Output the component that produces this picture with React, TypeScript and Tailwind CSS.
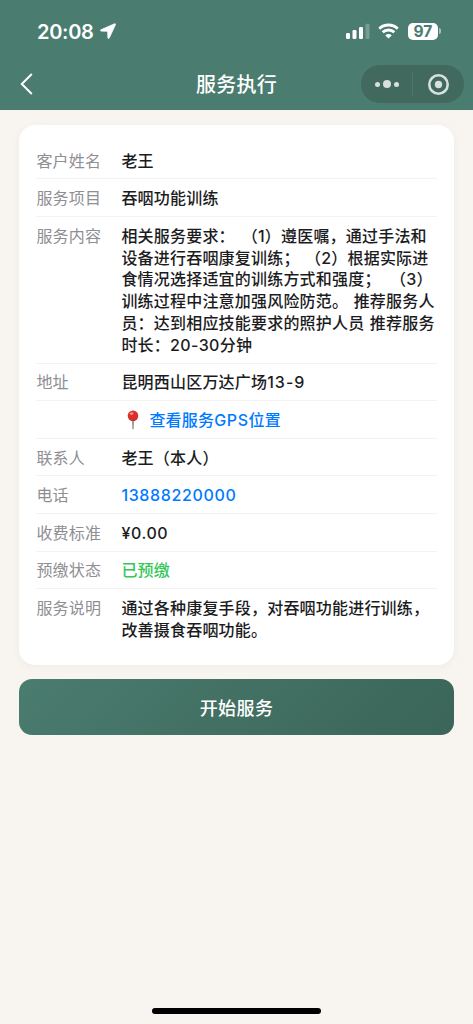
import type { ReactNode } from "react";

type Row = {
  label: string;
  lines: ReactNode[];
  tone?: string;
};

const rows: Row[] = [
  { label: "客户姓名", lines: ["老王"] },
  { label: "服务项目", lines: ["吞咽功能训练"] },
  {
    label: "服务内容",
    lines: [
      <span className="[word-spacing:2.5px]">相关服务要求： （1）遵医嘱，通过手法和</span>,
      <span className="[word-spacing:1px]">设备进行吞咽康复训练； （2）根据实际进</span>,
      <span className="[word-spacing:5px]">食情况选择适宜的训练方式和强度； （3）</span>,
      <span className="[word-spacing:1px]">训练过程中注意加强风险防范。 推荐服务人</span>,
      <span className="[word-spacing:1px]">员：达到相应技能要求的照护人员 推荐服务</span>,
      <>时长：<span className="tracking-[0.4px]">20-30</span>分钟</>,
    ],
  },
  { label: "地址", lines: [<>昆明西山区万达广场<span className="tracking-[1px]">13-9</span></>] },
  {
    label: "",
    tone: "text-[#007aff]",
    lines: [
      <span className="flex items-center">
        <PinIcon />
        查看服务<span className="tracking-[0.6px]">GPS</span>位置
      </span>,
    ],
  },
  { label: "联系人", lines: ["老王（本人）"] },
  { label: "电话", lines: ["13888220000"], tone: "text-[#007aff] tracking-[0.65px]" },
  { label: "收费标准", lines: ["¥0.00"], tone: "text-[#1c1c1e] tracking-[0.6px]" },
  { label: "预缴状态", lines: ["已预缴"], tone: "text-[#34c759]" },
  {
    label: "服务说明",
    lines: ["通过各种康复手段，对吞咽功能进行训练，", "改善摄食吞咽功能。"],
  },
];

function PinIcon() {
  return (
    <svg className="ml-[5px] mr-[9px] -mt-[2px] shrink-0" width="14" height="20" viewBox="0 0 14 20">
      <path d="M6.1 9h1.8l-.3 9.4-.6 1-.6-1z" fill="#85807e" />
      <circle cx="7" cy="5.7" r="5.3" fill="#d9302c" />
      <path d="M2.4 8.3a5.3 5.3 0 0 0 9.2 0 6 6 0 0 1-9.2 0z" fill="#a81f1e" />
      <ellipse cx="5.6" cy="3.6" rx="1.9" ry="1.4" fill="#f58a80" />
    </svg>
  );
}

function StatusBar() {
  return (
    <div className="h-[62px] pl-[37px] pr-[32px] flex items-center justify-between">
      <div className="flex items-center gap-[6px]">
        <span className="w-[57px] text-[20px] leading-none tracking-[-0.3px] font-semibold mt-px">20:08</span>
        <svg width="16" height="16" viewBox="0 0 16 16" fill="currentColor" stroke="currentColor" strokeWidth="0.8" strokeLinejoin="round">
          <path d="M14.8.7.9 6.8c-.7.3-.5 1.2.2 1.3l6.6.2.2 6.6c0 .8 1 .9 1.3.2L15.5 1.6c.2-.6-.2-1.1-.7-.9z" />
        </svg>
      </div>

      <div className="flex items-center">
        <svg width="24" height="16" viewBox="0 0 24 16" fill="currentColor">
          <rect x="0" y="10" width="4" height="6" rx="1.2" />
          <rect x="6.5" y="7" width="4" height="9" rx="1.2" />
          <rect x="13" y="4" width="4" height="12" rx="1.2" />
          <rect x="19.5" y="0.7" width="4" height="15.3" rx="1.2" opacity="0.25" />
        </svg>
        <svg className="ml-[8px]" width="21" height="16" viewBox="0 0 21 16" fill="none" stroke="currentColor" strokeWidth="2.9">
          <path d="M1.3 5.7a13.2 13.2 0 0 1 18.4 0" />
          <path d="M4.7 9.3a8.3 8.3 0 0 1 11.6 0" />
          <path d="M10.5 15.6 7.3 12.4a4.6 4.6 0 0 1 6.4 0z" fill="currentColor" stroke="none" />
        </svg>
        <span className="ml-[9px] w-[30px] h-[17px] pt-[1.5px] rounded-[5px] bg-white text-[#4a7c6f] text-[15.5px] leading-none font-bold flex items-center justify-center">
          97
        </span>
        <span className="ml-px w-[2px] h-[6px] rounded-r-full bg-white/50" />
      </div>
    </div>
  );
}

function NavBar() {
  return (
    <div className="h-[48px] pr-[9px] grid grid-cols-[112px_1fr_103px] items-start">
      <svg className="ml-[20px] mt-[11px]" width="14" height="22" viewBox="0 0 14 22" fill="none" stroke="currentColor" strokeWidth="2">
        <path d="M11.8 1 1.8 11l10 10" />
      </svg>
      <h1 className="mt-[9px] text-center text-[20px] leading-[28px] tracking-[0.2px] font-medium">
        服务执行
      </h1>
      <div className="mt-[3px] h-[38px] rounded-full bg-[#41695e] text-[#d7e0dd] flex items-center">
        <div className="flex-1 flex items-center justify-center gap-[3px]">
          <span className="w-[5px] h-[5px] rounded-full bg-current" />
          <span className="w-[8px] h-[8px] rounded-full bg-current" />
          <span className="w-[5px] h-[5px] rounded-full bg-current" />
        </div>
        <span className="w-px h-[24px] bg-[#4f766c]" />
        <div className="flex-1 flex items-center justify-center">
          <svg width="21" height="21" viewBox="0 0 21 21">
            <circle cx="10.5" cy="10.5" r="9.2" fill="none" stroke="currentColor" strokeWidth="2.6" />
            <circle cx="10.5" cy="10.5" r="3.7" fill="currentColor" />
          </svg>
        </div>
      </div>
    </div>
  );
}

export default function App() {
  return (
    <div className="min-h-screen bg-[#f8f4ef] flex flex-col font-[Inter,'Noto_Sans_CJK_SC',sans-serif]">
      <header className="bg-[#4a7c6f] text-white">
        <StatusBar />
        <NavBar />
      </header>

      {/* DETAILS */}
      <main className="pt-[15px] px-[19.4px]">
        <div className="rounded-[16px] bg-white px-[17px] pt-[16.9px] pb-[17.3px] shadow-[0_2px_10px_rgba(0,0,0,0.04)]">
          {rows.map((row, i) => (
            <div
              key={i}
              className="flex pt-[8.8px] pb-[6px] border-b border-[#f3f3f3] last:border-b-0 text-[16px] leading-[21.8px] tracking-[0.2px]"
            >
              <div className="w-[85px] shrink-0 text-[#8e8e93]">{row.label}</div>
              <div className={`font-medium whitespace-nowrap ${row.tone ?? "text-[#1c1c1e]"}`}>
                {row.lines.map((line, j) => (
                  <div key={j}>{line}</div>
                ))}
              </div>
            </div>
          ))}
        </div>

        <button className="mt-[14.2px] pt-[2px] w-full h-[56px] rounded-[13px] bg-[linear-gradient(135deg,#4a7c6f,#3a6558)] text-white text-[18px] tracking-[0.4px] font-medium">
          开始服务
        </button>
      </main>

      {/* HOME INDICATOR */}
      <div className="mt-auto mb-[10px] mx-auto w-[169px] h-[6px] rounded-full bg-black" />
    </div>
  );
}
